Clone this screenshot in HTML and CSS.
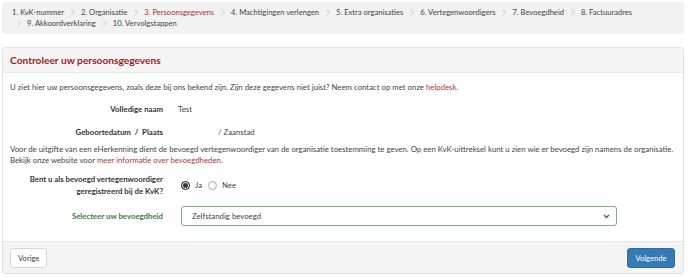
FILE: index.html
```html
<!DOCTYPE html>
<html lang="nl">
<head>
    <meta charset="UTF-8">
    <meta name="viewport" content="width=device-width, initial-scale=1.0">
    <title>Controleer uw persoonsgegevens</title>
    <link rel="stylesheet" href="styles.css">
</head>
<body>
    <div class="steps">
        <ol>
            <li>1. KvK-nummer</li>
            <li>2. Organisatie</li>
            <li class="active">3. Persoonsgegevens</li>
            <li>4. Machtigingen verlengen</li>
            <li>5. Extra organisaties</li>
            <li>6. Vertegenwoordigers</li>
            <li>7. Bevoegdheid</li>
            <li>8. Factuuradres</li>
            <li>9. Akkoordverklaring</li>
            <li>10. Vervolgstappen</li>
        </ol>
    </div>

    <div class="panel">
        <div class="panel-heading">
            <h2>Controleer uw persoonsgegevens</h2>
        </div>
        <div class="panel-body">
            <p class="intro">U ziet hier uw persoonsgegevens, zoals deze bij ons bekend zijn. Zijn deze gegevens niet juist? Neem contact op met onze <a href="#">helpdesk</a>.</p>

            <div class="row">
                <div class="row-label">Volledige naam</div>
                <div class="row-value">Test</div>
            </div>
            <div class="row row-birth">
                <div class="row-label">Geboortedatum &nbsp;/&nbsp; Plaats</div>
                <div class="row-value birth-value">/ Zaanstad</div>
            </div>

            <p class="info">Voor de uitgifte van een eHerkenning dient de bevoegd vertegenwoordiger van de organisatie toestemming te geven. Op een KvK-uittreksel kunt u zien wie er bevoegd zijn namens de organisatie. Bekijk onze website voor <a href="#">meer informatie over bevoegdheden</a>.</p>

            <div class="row row-radio">
                <div class="row-label">Bent u als bevoegd vertegenwoordiger geregistreerd bij de KvK?</div>
                <div class="row-value radios">
                    <label class="radio"><span class="dot checked"></span>Ja</label>
                    <label class="radio"><span class="dot"></span>Nee</label>
                </div>
            </div>

            <div class="row row-select">
                <div class="row-label select-label">Selecteer uw bevoegdheid</div>
                <div class="row-value">
                    <div class="select-wrap">
                        <select class="select">
                            <option>Zelfstandig bevoegd</option>
                            <option>Gezamenlijk bevoegd</option>
                        </select>
                        <svg class="chevron" width="7" height="5" viewBox="0 0 7 5"><path d="M1 1 L3.5 3.5 L6 1" fill="none" stroke="#555" stroke-width="1.3"/></svg>
                    </div>
                </div>
            </div>
        </div>
        <div class="panel-footer">
            <button class="btn btn-default">Vorige</button>
            <button class="btn btn-primary">Volgende</button>
        </div>
    </div>
</body>
</html>
```

FILE: styles.css
```css
body {
    margin: 0;
    padding: 2px 4px 2px 2px;
    font-family: Lato, "Open Sans", sans-serif;
    font-size: 7.8px;
    color: #444;
    background: #fff;
}
a {
    color: #b8323a;
    text-decoration: none;
}
.steps {
    background: #f2f2f2;
    border-radius: 3px;
    padding: 5px 8px 5px 8px;
    font-size: 7.6px;
}
.steps ol {
    list-style: none;
    margin: 0;
    padding: 0;
    display: flex;
    flex-wrap: wrap;
    line-height: 11px;
}
.steps li {
    display: flex;
    align-items: center;
}
.steps li + li::before {
    content: "";
    width: 4px;
    height: 4px;
    border-top: 1px solid #d4d4d4;
    border-right: 1px solid #d4d4d4;
    transform: rotate(45deg);
    margin: 0 7px 0 5px;
}
.steps li:first-child {
    margin-left: 2px;
}
.steps li.active {
    color: #a8323a;
}
.panel {
    margin-top: 13px;
    border: 1px solid #e2e2e2;
    border-radius: 3px;
    overflow: hidden;
}
.panel-heading {
    background: #f5f5f5;
    border-bottom: 1px solid #e6e6e6;
    height: 24px;
    display: flex;
    align-items: center;
    padding: 0 7px;
}
.panel-heading h2 {
    margin: 0;
    font-size: 10.2px;
    font-weight: 700;
    color: #9c1c22;
}
.panel-body {
    padding: 9px 7px 15px 7px;
    line-height: 11px;
}
.panel-body p {
    margin: 0;
}
.row {
    display: grid;
    grid-template-columns: 153px 1fr;
    column-gap: 15px;
    margin-top: 11px;
}
.row-birth {
    margin-top: 12px;
}
.row-label {
    text-align: right;
    font-weight: 700;
    color: #333;
}
.birth-value {
    padding-left: 40px;
}
.info {
    margin-top: 6px !important;
}
.row-radio {
    margin-top: 7px;
    line-height: 12px;
}
.radios {
    display: flex;
    align-items: center;
    padding-left: 3px;
}
.radio {
    display: flex;
    align-items: center;
    margin-right: 6px;
}
.dot {
    width: 9px;
    height: 9px;
    border: 1px solid #aaa;
    border-radius: 50%;
    box-sizing: border-box;
    margin-right: 5px;
    background: #fff;
}
.dot.checked {
    background: #333;
    border-color: #333;
    box-shadow: inset 0 0 0 1px #fff;
}
.row-select {
    margin-top: 9px;
    align-items: center;
}
.select-label {
    color: #3d7a46;
}
.select-wrap {
    position: relative;
    width: 436px;
    margin-left: 3px;
}
.select {
    appearance: none;
    -webkit-appearance: none;
    width: 100%;
    height: 20px;
    border: 1px solid #7cb07f;
    border-radius: 3px;
    background: #fff;
    font-family: inherit;
    font-size: 7.8px;
    color: #444;
    padding: 0 0 0 10px;
}
.chevron {
    position: absolute;
    right: 7px;
    top: 8px;
}
.panel-footer {
    background: #f4f4f4;
    border-top: 1px solid #e6e6e6;
    padding: 6px 8px 5px 7px;
    display: flex;
    justify-content: space-between;
}
.btn {
    font-family: inherit;
    font-size: 7.6px;
    height: 20px;
    border-radius: 3px;
    padding: 0 7px;
    cursor: pointer;
}
.btn-default {
    background: #fff;
    border: 1px solid #d6d6d6;
    color: #444;
    width: 37px;
}
.btn-primary {
    background: #337ab7;
    border: 1px solid #2e6da4;
    color: #fff;
    width: 48px;
}
```
